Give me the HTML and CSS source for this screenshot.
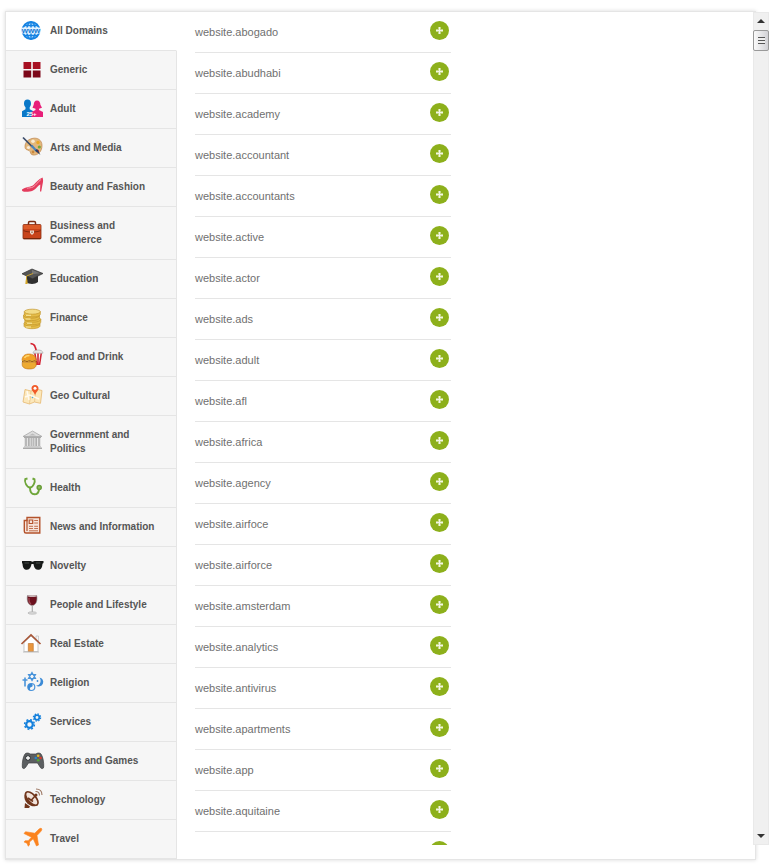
FILE: index.html
```html
<!DOCTYPE html>
<html lang="en">
<head>
    <meta charset="UTF-8">
    <meta name="viewport" content="width=device-width, initial-scale=1.0">
    <title>Domains</title>
    <link rel="stylesheet" href="styles.css">
</head>
<body>
    <div class="panel">
        <nav class="categories">
            <a href="#" class="category active">
                <svg class="icon" viewBox="0 0 24 24"><circle cx="11" cy="11.500" r="8.500" fill="#d8edff" stroke="#1683e2" stroke-width="1.800"/><ellipse cx="11" cy="11.500" rx="4.300" ry="8.500" fill="none" stroke="#1683e2" stroke-width="1.500"/><path d="M11 3v17M4 6.500h14M4 16.500h14" stroke="#1683e2" stroke-width="1.500"/><path d="M1.500 8.500h19v6h-19z" fill="#e4f3ff"/><text x="11" y="13.500" text-anchor="middle" class="icon-text" font-size="8" fill="#1278d4">www</text></svg>
                <span>All Domains</span>
            </a>
            <a href="#" class="category">
                <svg class="icon" viewBox="0 0 24 24"><path d="M3.500 4h7.700v7H3.500zM12.800 4h7.700v7h-7.700z" fill="#a81022"/><path d="M3.500 12.500h7.700v7H3.500zM12.800 12.500h7.700v7h-7.700z" fill="#7c0719"/></svg>
                <span>Generic</span>
            </a>
            <a href="#" class="category">
                <svg class="icon" viewBox="0 0 24 24"><path d="M7.500 2.500c2.300 0 3.500 1.600 3.500 4 0 1.800-.7 2.800-1.300 3.800v2l3.300 1.700V20H2v-5.700l3.500-2v-2C4.700 9.300 4 8.300 4 6.500c0-2.400 1.200-4 3.500-4z" fill="#0a78c8"/><path d="M17 3.500c2.400 0 3.200 1.700 3.400 4.200l1.600 3-3 1V13l4 2v5H11.500v-5l4-2v-1.300l-3-1 1.200-3c.2-2.500 1-4.200 3.300-4.200z" fill="#e81f79"/><text x="11.500" y="19" text-anchor="middle" class="icon-text" font-size="6" fill="#fff">25+</text></svg>
                <span>Adult</span>
            </a>
            <a href="#" class="category">
                <svg class="icon" viewBox="0 0 24 24"><path d="M12 2.500c6-1.500 10 2 10 7 0 6-4 10-9 9.500-3-.3-2-3.500-4-4.500S5 14 5 10.500c0-4 3-7 7-8z" fill="#e3b87c" stroke="#bd8348" stroke-width=".7"/><circle cx="13" cy="5.300" r="1.800" fill="#f8ecd2"/><circle cx="18" cy="6.500" r="1.700" fill="#e9a727"/><circle cx="19.300" cy="11" r="1.600" fill="#72a63b"/><circle cx="17.500" cy="15" r="1.600" fill="#b8322c"/><circle cx="8.500" cy="11.500" r="1.600" fill="#f8ead8"/><circle cx="13" cy="16" r="1.400" fill="#c8873e"/><path d="M3 1.500l9.500 9.500" stroke="#3c4d6b" stroke-width="1.700"/><path d="M11.500 9.500l5 5.500" stroke="#4b83bb" stroke-width="2.200"/><path d="M15 14.500l2-1.500 3.500 6z" fill="#204267"/></svg>
                <span>Arts and Media</span>
            </a>
            <a href="#" class="category">
                <svg class="icon" viewBox="0 0 24 24"><path d="M22.500 2.500c-4 1.500-6.500 5-9 7.500C11 12 5 12 2 14.500c-.5 1.700 1 2.300 4 2.300 5.500 0 8.500-1.500 11-4.600 1.500-1.700 2-2.200 3.300-2.700L20 16.500h1.200l1.500-8c.5-2 .6-4-.2-6z" fill="#e43c5d"/><path d="M21 4.500c-3 2-5 6-8 7.500-2 1-4 .8-6 1.200" fill="none" stroke="#f59bac" stroke-width="1"/></svg>
                <span>Beauty and Fashion</span>
            </a>
            <a href="#" class="category">
                <svg class="icon" viewBox="0 0 24 24"><path d="M8.500 4V1.800C8.500.8 9 .5 9.800.5h4.400c.8 0 1.300.3 1.300 1.300V4" fill="none" stroke="#7b2b12" stroke-width="1.500"/><rect x="3" y="3.500" width="18" height="14.500" rx="1" fill="#c8431a" stroke="#8a2d10" stroke-width=".8"/><path d="M3.500 4h17v4h-17z" fill="#dc5a28"/><path d="M3.500 9.500c3 2 14 2 17 0" fill="none" stroke="#832a0f" stroke-width="1"/><path d="M3.500 17.500h17" stroke="#742509"/><path d="M10 9.500h4v2.500l-2 2-2-2z" fill="#ead8cd"/><path d="M11.500 10.500h1V12h-1z" fill="#86401f"/></svg>
                <span>Business and Commerce</span>
            </a>
            <a href="#" class="category">
                <svg class="icon" viewBox="0 0 24 24"><path d="M6 9v6c3 2.500 9 2.500 12 0V9z" fill="#303030"/><path d="M12 2l11 4.500-10.500 5.300L2 6.800z" fill="#555" stroke="#333" stroke-width=".7"/><path d="M12 2.800l8 3.500-8 1z" fill="#777"/><path d="M13 6.500L6.500 9v5" fill="none" stroke="#c9a12c" stroke-width="1"/><path d="M5.800 12.500h1.500l.4 4.500H5.300z" fill="#d6a829"/></svg>
                <span>Education</span>
            </a>
            <a href="#" class="category">
                <svg class="icon" viewBox="0 0 24 24"><g fill="#e5bd48" stroke="#bd9028" stroke-width=".6"><path d="M4 17.500v2.500c0 1.500 3.500 2.700 8 2.700s8-1.200 8-2.700v-2.500z"/><ellipse cx="12" cy="17.500" rx="8" ry="2.700"/><path d="M4.800 13.500V16c0 1.500 3.500 2.600 8 2.600s8-1.100 8-2.600v-2.500z"/><ellipse cx="12.800" cy="13.500" rx="8" ry="2.700"/><path d="M3.500 9.500V12c0 1.500 3.500 2.600 8 2.600s8-1.100 8-2.600V9.500z"/><ellipse cx="11.500" cy="9.500" rx="8" ry="2.700"/><path d="M4.300 5.700v2.600c0 1.500 3.500 2.600 8 2.600s8-1.100 8-2.600V5.700z"/></g><ellipse cx="12.300" cy="5.700" rx="8" ry="2.500" fill="#f3dc87" stroke="#c3952a" stroke-width=".7"/><path d="M6 9.300h5M5.500 13h5M7 17.200h5M6 21h5" stroke="#faeaa5"/></svg>
                <span>Finance</span>
            </a>
            <a href="#" class="category">
                <svg class="icon" viewBox="0 0 24 24"><path d="M10.500-1.500c3 .3 4 1 4.500 3L16.500 6" fill="none" stroke="#d5202e" stroke-width="1.700"/><path d="M14 8h8l-1.500 12.500h-5z" fill="#fff"/><path d="M14.800 8l2 12M18 8v12M21.300 8l-1.800 12" stroke="#cf2634" stroke-width="1.600"/><path d="M13 8.200c0-2 2-3.200 5-3.200s5 1.200 5 3.200z" fill="#e7e7e7" stroke="#aaa" stroke-width=".7"/><path d="M2 15.500c0-4.500 3-6.500 7-6.500s7 2 7 6.500z" fill="#f0a026" stroke="#c97713" stroke-width=".6"/><path d="M4.500 13c1-2 3-2.500 5-2.500" fill="none" stroke="#ffd66b" stroke-width="1.400"/><path d="M2 15.500h14.500v1.700H2z" fill="#85471c"/><path d="M2 15.500l2.500 1 2.500-1 2.500 1.200 2.500-1.200 2.500 1 2-1" fill="none" stroke="#e9b931"/><path d="M2.200 17.200h14v2.500c0 2.700-2.500 4.300-6.800 4.300s-7.200-1.600-7.200-4.300z" fill="#edaa31" stroke="#bc7014" stroke-width=".6"/></svg>
                <span>Food and Drink</span>
            </a>
            <a href="#" class="category">
                <svg class="icon" viewBox="0 0 24 24"><path d="M5 5.500L11 7l5-2 6 1.500-1.500 12.800-6-1.300-5 2-6.500-2z" fill="#fce8bb" stroke="#e8bd7b" stroke-width=".9"/><path d="M11 7l-1.500 13M16 5l-1.500 13" stroke="#e8c386" stroke-width=".8"/><path d="M5 13l5-2 9 4M7 7l2 9" fill="none" stroke="#fffaf0" stroke-width="1.500"/><circle cx="12.500" cy="13.500" r=".8" fill="#4da8d8"/><path d="M15 1c2.200 0 3.500 1.500 3.500 3.400C18.500 6.500 16 8 15 11c-1-3-3.500-4.500-3.500-6.600C11.500 2.500 12.800 1 15 1z" fill="#f15a29"/><circle cx="15" cy="4.300" r="1.500" fill="#fff"/></svg>
                <span>Geo Cultural</span>
            </a>
            <a href="#" class="category">
                <svg class="icon" viewBox="0 0 24 24"><path d="M12.500 1L22 6.500H3z" fill="#ddd" stroke="#a7a7a7" stroke-width=".8"/><path d="M9 5.500l3.500-2 3.500 2z" fill="#bbb"/><path d="M4 6.500h17V8H4z" fill="#aaa"/><path d="M6 8v8M9.200 8v8M12.500 8v8M15.800 8v8M19 8v8" stroke="#a0a0a0" stroke-width="2.400"/><path d="M6 8v8M9.200 8v8M12.500 8v8M15.800 8v8M19 8v8" stroke="#ddd" stroke-width=".8"/><path d="M4 16h17v1.500H4z" fill="#ccc"/><path d="M3 17.500h19V19H3z" fill="#aaa"/></svg>
                <span>Government and Politics</span>
            </a>
            <a href="#" class="category">
                <svg class="icon" viewBox="0 0 24 24"><path d="M7.500 2.500L5.300 3C4 6 7 11.500 10 11.500S15.500 6 14.500 3.300L12.500 2.500" fill="none" stroke="#6fa63a" stroke-width="1.900"/><path d="M10 11.500c0 4 1.500 6.800 4.500 6.800s4.200-1.800 4.500-5" fill="none" stroke="#6fa63a" stroke-width="1.900"/><circle cx="19.200" cy="11.500" r="2" fill="#8dbb60" stroke="#679c35" stroke-width="1.500"/></svg>
                <span>Health</span>
            </a>
            <a href="#" class="category">
                <svg class="icon" viewBox="0 0 24 24"><path d="M7 2.500h12.800v15.500H6c-1.200 0-1.700-.8-1.700-1.800V5.500H7z" fill="#f6e4db" stroke="#b4532c" stroke-width="1.400"/><path d="M7 4.500v11.500" stroke="#b4532c" stroke-width="1.200"/><path d="M9.200 5h3.500v3.500H9.200z" fill="none" stroke="#b4532c" stroke-width="1.200"/><path d="M14.200 5.500H18M14.200 8H18M9 11.300h4M14.200 11.300H18M9 13.500h4M14.200 13.500H18M9 15.800h9" stroke="#c2704e" stroke-width="1"/></svg>
                <span>News and Information</span>
            </a>
            <a href="#" class="category">
                <svg class="icon" viewBox="0 0 24 24"><path d="M2 7h8.500l2 .8 2-.8H23.500v2l-1 .7c-.3 4-1.500 6-4.500 6-3.300 0-4-3-4.500-5.700h-2c-.5 2.700-1.500 5.700-4.500 5.700s-4.200-2-4.500-6L2 9z" fill="#171a19"/><path d="M4.500 9h4.500M16 9h4.500" stroke="#454b48"/></svg>
                <span>Novelty</span>
            </a>
            <a href="#" class="category">
                <svg class="icon" viewBox="0 0 24 24"><path d="M7.500 2.500h9.200c1 5-.5 9.500-4.400 10-4.200-.5-5.800-5-4.800-10z" fill="#6c111e" stroke="#888" stroke-width=".6"/><ellipse cx="12.200" cy="3" rx="4.500" ry="1" fill="#c9b5b7"/><path d="M9 5c-.3 3 .5 5 2 6" fill="none" stroke="#a04a54" stroke-width="1.200"/><path d="M12.300 12.500V19" stroke="#aaa" stroke-width="1.200"/><ellipse cx="12.200" cy="20" rx="4.300" ry="1.200" fill="#ddd" stroke="#aaa" stroke-width=".6"/></svg>
                <span>People and Lifestyle</span>
            </a>
            <a href="#" class="category">
                <svg class="icon" viewBox="0 0 24 24"><path d="M16 4h2.500v5H16z" fill="#f7f7f7" stroke="#bbb" stroke-width=".7"/><path d="M4 10.500L11 4l7 6.500v9H4z" fill="#fff" stroke="#bbb" stroke-width=".8"/><path d="M1.500 12L11 3l9.500 9" fill="none" stroke="#a85839" stroke-width="1.700"/><path d="M8.300 11.500h5v8h-5z" fill="#e9963e" stroke="#ba6d27" stroke-width=".6"/><path d="M3 20h16" stroke="#bdbdbd"/></svg>
                <span>Real Estate</span>
            </a>
            <a href="#" class="category">
                <svg class="icon" viewBox="0 0 24 24"><g fill="none" stroke="#4a94da" stroke-width="1.200"><path d="M12 1.500l3.500 6h-7zM12 9.500l-3.500-6h7z"/><path d="M5 6.500v9M2.500 9h5" stroke-width="1.600"/><circle cx="11.300" cy="16" r="3.500"/></g><path d="M11.300 12.500a1.800 1.800 0 0 1 0 3.500 1.800 1.800 0 0 0 0 3.500 3.500 3.500 0 0 1 0-7z" fill="#3b8ad6"/><path d="M19.500 6.500a4.500 4.500 0 1 1-3.500 8c4 .5 6-4.500 3.500-8z" fill="#3b8ad6"/><circle cx="17.500" cy="10" r=".9" fill="#3b8ad6"/></svg>
                <span>Religion</span>
            </a>
            <a href="#" class="category">
                <svg class="icon" viewBox="0 0 24 24"><g fill="none" stroke="#1480dc"><circle cx="9.500" cy="14.500" r="3.300" stroke-width="2.200"/><circle cx="9.500" cy="14.500" r="4.900" stroke-width="1.500" stroke-dasharray="1.950 1.900"/><circle cx="17" cy="7.500" r="2.300" stroke-width="1.700"/><circle cx="17" cy="7.500" r="3.600" stroke-width="1.300" stroke-dasharray="1.450 1.380"/></g></svg>
                <span>Services</span>
            </a>
            <a href="#" class="category">
                <svg class="icon" viewBox="0 0 24 24"><path d="M5 5c1-1.300 4-1.300 5 0h6c1-1.300 4-1.300 5 0 2 2.500 3 9 2.700 13-.2 2-2.200 2-3.200.7L17.500 14h-9l-3 4.500c-1 1.500-3 1.500-3.200-.5C2 14 3 7.500 5 5z" fill="#5c5f61" stroke="#3f4142" stroke-width=".7"/><circle cx="8" cy="9" r="2.800" fill="#3f4345"/><path d="M8 7v4M6 9h4" stroke="#fff" stroke-width="1.300"/><circle cx="18.200" cy="6.700" r="1.300" fill="#e7b927"/><circle cx="15.800" cy="9" r="1.300" fill="#2788cc"/><circle cx="20.500" cy="9" r="1.300" fill="#db392d"/><circle cx="18.200" cy="11.300" r="1.300" fill="#54a737"/></svg>
                <span>Sports and Games</span>
            </a>
            <a href="#" class="category">
                <svg class="icon" viewBox="0 0 24 24"><path d="M6 4C2.500 8 4.500 15.500 11.500 18c2.200.7 4.500.3 6-.8z" fill="#71361c"/><ellipse cx="11.800" cy="10.500" rx="4" ry="8.300" transform="rotate(-42 11.800 10.500)" fill="#f1e3db" stroke="#71361c" stroke-width="1.700"/><path d="M11 12.500l5-5.500M8 10l5 3.500" stroke="#71361c" stroke-width="1.600"/><circle cx="16" cy="7" r="1.500" fill="#71361c"/><path d="M5 15l5 3.500-1 1.500H4.500z" fill="#71361c"/><path d="M15.500 3.500c2.500-.2 4 1.500 4 4M16 1c4 0 6 2.500 6 6" fill="none" stroke="#9a7460" stroke-width="1.100"/></svg>
                <span>Technology</span>
            </a>
            <a href="#" class="category">
                <svg class="icon" viewBox="0 0 24 24"><path d="M21.500 1.500c.8.8 0 2.300-1 3.300L17 8.500 18.500 18l-2 1-3.300-7.200L9.500 15v3l-1.300 1.200-1.200-3-3-1.200 1.200-1.300h3l3.300-3.500L4 6.500l1.500-1.800 9.300 1.500 3.500-3.500c1-1 2.500-1.800 3.200-1.200z" fill="#fb831e" stroke="#fb831e" stroke-width=".6"/></svg>
                <span>Travel</span>
            </a>
        </nav>
        <div class="results">
            <ul class="domains">
                <li class="domain"><span>website.abogado</span><button class="add" aria-label="Add website.abogado"></button></li>
                <li class="domain"><span>website.abudhabi</span><button class="add" aria-label="Add website.abudhabi"></button></li>
                <li class="domain"><span>website.academy</span><button class="add" aria-label="Add website.academy"></button></li>
                <li class="domain"><span>website.accountant</span><button class="add" aria-label="Add website.accountant"></button></li>
                <li class="domain"><span>website.accountants</span><button class="add" aria-label="Add website.accountants"></button></li>
                <li class="domain"><span>website.active</span><button class="add" aria-label="Add website.active"></button></li>
                <li class="domain"><span>website.actor</span><button class="add" aria-label="Add website.actor"></button></li>
                <li class="domain"><span>website.ads</span><button class="add" aria-label="Add website.ads"></button></li>
                <li class="domain"><span>website.adult</span><button class="add" aria-label="Add website.adult"></button></li>
                <li class="domain"><span>website.afl</span><button class="add" aria-label="Add website.afl"></button></li>
                <li class="domain"><span>website.africa</span><button class="add" aria-label="Add website.africa"></button></li>
                <li class="domain"><span>website.agency</span><button class="add" aria-label="Add website.agency"></button></li>
                <li class="domain"><span>website.airfoce</span><button class="add" aria-label="Add website.airfoce"></button></li>
                <li class="domain"><span>website.airforce</span><button class="add" aria-label="Add website.airforce"></button></li>
                <li class="domain"><span>website.amsterdam</span><button class="add" aria-label="Add website.amsterdam"></button></li>
                <li class="domain"><span>website.analytics</span><button class="add" aria-label="Add website.analytics"></button></li>
                <li class="domain"><span>website.antivirus</span><button class="add" aria-label="Add website.antivirus"></button></li>
                <li class="domain"><span>website.apartments</span><button class="add" aria-label="Add website.apartments"></button></li>
                <li class="domain"><span>website.app</span><button class="add" aria-label="Add website.app"></button></li>
                <li class="domain"><span>website.aquitaine</span><button class="add" aria-label="Add website.aquitaine"></button></li>
                <li class="domain"><span></span><button class="add" aria-label="Add domain"></button></li>
            </ul>
            <div class="scrollbar">
                <button class="arrow up" aria-label="Scroll up"></button>
                <div class="thumb"></div>
                <button class="arrow down" aria-label="Scroll down"></button>
            </div>
        </div>
    </div>
</body>
</html>
```

FILE: styles.css
```css
* {
    box-sizing: border-box;
}

body {
    margin: 0;
    padding: 11px 20px 6px 5px;
    font-family: Arial, "Liberation Sans", sans-serif;
    background-color: #fff;
}

button {
    border: 0;
    padding: 0;
    cursor: pointer;
}

.panel {
    display: flex;
    align-items: flex-start;
    border: 1px solid #e5e5e5;
    box-shadow: 0 0 4px rgba(0, 0, 0, 0.15);
}

/* category menu */
.categories {
    flex: 0 0 171px;
}

.category {
    display: flex;
    align-items: center;
    gap: 6px;
    padding: 12px 14px;
    border-right: 1px solid #e5e5e5;
    border-bottom: 1px solid #e5e5e5;
    background-color: #f6f6f6;
    color: #555;
    font-size: 10px;
    font-weight: bold;
    line-height: 14px;
    text-decoration: none;
}

.category.active {
    background-color: #fff;
    border-right-color: #fff;
}

.category:hover {
    background-color: #fff;
}

.icon {
    flex: none;
    width: 24px;
    height: 24px;
    margin: -5px 0;
    overflow: visible;
}

.icon-text {
    font-family: Arial, "Liberation Sans", sans-serif;
    font-weight: bold;
}

/* domain list */
.results {
    flex: 1;
    display: flex;
    justify-content: space-between;
    height: calc(100vh - 33px);
    margin-right: -14px;
    padding-left: 18px;
    overflow: hidden;
}

.domains {
    flex: 0 1 256px;
    margin: 0;
    padding: 0;
    list-style: none;
}

.domain {
    display: flex;
    justify-content: space-between;
    padding: 9px 2px 9px 0;
    border-bottom: 1px solid #e5e5e5;
    color: #707070;
    font-size: 11px;
    line-height: 22px;
    height: 41px;
}

.add {
    width: 19px;
    height: 19px;
    border-radius: 50%;
    background: linear-gradient(#f3f7e4, #f3f7e4) 6px 9px / 7px 1px no-repeat,
        linear-gradient(#f3f7e4, #f3f7e4) 9px 6px / 1px 7px no-repeat,
        linear-gradient(#c5d785, #c5d785) center / 3px 7px no-repeat,
        linear-gradient(#c5d785, #c5d785) center / 7px 3px no-repeat,
        #8db01b;
}

/* scrollbar */
.scrollbar {
    display: flex;
    flex-direction: column;
    width: 16px;
    background-color: #f0f0f0;
    box-shadow: inset 0 0 0 1px #e9e9e9;
}

.arrow {
    display: flex;
    align-items: center;
    justify-content: center;
    height: 18px;
    background: none;
}

.arrow::before {
    content: "";
    border: 4px solid transparent;
}

.up::before {
    border-top: 0;
    border-bottom-color: #333;
}

.down::before {
    border-bottom: 0;
    border-top-color: #333;
}

.down {
    margin-top: auto;
}

.thumb {
    height: 21px;
    border: 1px solid #999;
    border-radius: 2px;
    background: repeating-linear-gradient(#555 0 1px, #eee 1px 3px) center / 7px 7px no-repeat,
        linear-gradient(to right, #fafafa, #d2d2d6);
}
```
